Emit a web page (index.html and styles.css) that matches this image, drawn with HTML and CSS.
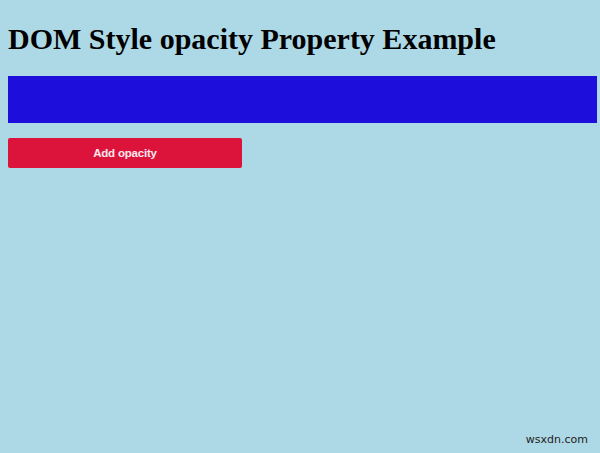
FILE: index.html
```html
<!DOCTYPE html>
<html>
<head>
<meta charset="utf-8">
<link rel="stylesheet" href="styles.css">
</head>
<body>
<h1 class="title">DOM Style opacity Property Example</h1>
<div class="box"></div>
<button class="btn">Add opacity</button>
<div class="watermark">wsxdn.com</div>
</body>
</html>
```
FILE: styles.css
```css
html, body {
  height: 100%;
}
body {
  margin: 0 3px 0 8px;
  background: #add8e6;
  font-family: "Liberation Serif", "Times New Roman", serif;
  position: relative;
  overflow: hidden;
}
.title {
  margin: 0;
  padding-top: 22px;
  font-size: 30px;
  font-weight: bold;
  line-height: 34px;
  color: #000;
}
.box {
  margin-top: 20px;
  height: 47px;
  background: #1e0edc;
}
.btn {
  display: block;
  margin-top: 15px;
  width: 234px;
  height: 30px;
  border: none;
  border-radius: 2px;
  background: #dc143c;
  color: #fde8ee;
  font-family: "Liberation Sans", Arial, sans-serif;
  font-weight: bold;
  font-size: 11.5px;
  letter-spacing: -0.2px;
  padding: 0;
}
.watermark {
  position: absolute;
  right: 9px;
  bottom: 7px;
  font-family: "DejaVu Sans", sans-serif;
  font-size: 11px;
  color: #222;
}
```
